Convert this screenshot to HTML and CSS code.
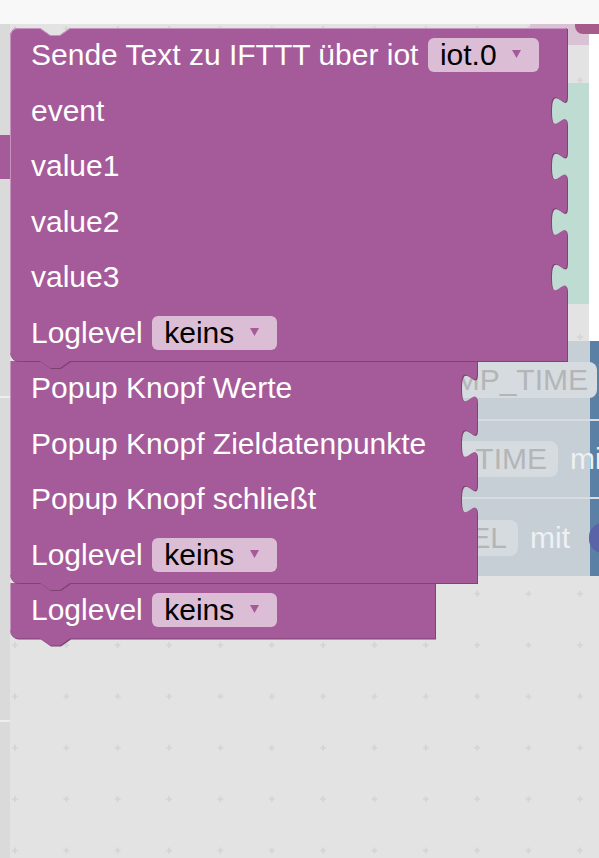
FILE: index.html
```html
<!DOCTYPE html>
<html lang="de">
<head>
<meta charset="utf-8">
<title>Blockly – IFTTT</title>
<link rel="stylesheet" href="styles.css">
</head>
<body>
<div class="page">
  <div class="toolbar"></div>
  <div class="workspace">
    <div class="rail">
      <div class="rail-a"></div>
      <div class="rail-hl"></div>
      <div class="rail-b"></div>
      <div class="rail-line"></div>
      <div class="rail-c"></div>
      <div class="rail-line"></div>
      <div class="rail-d"></div>
    </div>
    <div class="canvas">
      <svg class="grid" width="100%" height="100%">
        <defs>
          <pattern id="cross" width="51.35" height="51.35" patternUnits="userSpaceOnUse" x="-20.675" y="-20.775">
            <path d="M22.675,25.675 h6 M25.675,22.675 v6" stroke="#d3d3d3" stroke-width="1.6" fill="none"/>
          </pattern>
        </defs>
        <rect width="100%" height="100%" fill="url(#cross)"/>
      </svg>
      <div class="ghost"></div>
      <div class="pinkbar"></div>
      <div class="whitepane"></div>
      <div class="teal"></div>
      <div class="bg-block">
        <div class="bg-row">
          <span class="bg-pill bg-pill-1">MP_TIME</span>
        </div>
        <div class="bg-row bg-sep">
          <span class="bg-pill bg-pill-2">TIME</span>
          <span class="bg-label">mit</span>
        </div>
        <div class="bg-row bg-sep">
          <span class="bg-pill bg-pill-3">EL</span>
          <span class="bg-label">mit</span>
          <span class="bg-oval"></span>
        </div>
      </div>

      <div class="stack">
        <div class="block b1">
          <svg class="shape" width="560" height="345">
            <path class="dark" transform="translate(1,1)" d="M0,8 A8,8 0 0 1 8,0 H30 l10,7 h10 l10,-7 H557 V67.5 c0,20 -16,-16 -16,15 s16,-5 16,15 V123 c0,20 -16,-16 -16,15 s16,-5 16,15 V178.5 c0,20 -16,-16 -16,15 s16,-5 16,15 V234 c0,20 -16,-16 -16,15 s16,-5 16,15 V333 H60 l-10,7 h-10 l-10,-7 H8 A8,8 0 0 1 0,325 Z"/>
            <path class="main" d="M0,8 A8,8 0 0 1 8,0 H30 l10,7 h10 l10,-7 H557 V67.5 c0,20 -16,-16 -16,15 s16,-5 16,15 V123 c0,20 -16,-16 -16,15 s16,-5 16,15 V178.5 c0,20 -16,-16 -16,15 s16,-5 16,15 V234 c0,20 -16,-16 -16,15 s16,-5 16,15 V333 H60 l-10,7 h-10 l-10,-7 H8 A8,8 0 0 1 0,325 Z"/>
            <path class="light" d="M0.5,325 V8 A7.5,7.5 0 0 1 8,0.5 H30 l10,7 h10 l10,-7 H556"/>
          </svg>
          <div class="row">Sende Text zu IFTTT über iot
            <span class="dd"><span class="dd-text">iot.0</span><svg class="dd-arrow" width="9" height="8" viewBox="0 0 9 8"><path d="M0,0 H9 L4.5,8 Z"/></svg></span>
          </div>
          <div class="row">event</div>
          <div class="row">value1</div>
          <div class="row">value2</div>
          <div class="row">value3</div>
          <div class="row">Loglevel
            <span class="dd"><span class="dd-text">keins</span><svg class="dd-arrow" width="9" height="8" viewBox="0 0 9 8"><path d="M0,0 H9 L4.5,8 Z"/></svg></span>
          </div>
        </div>

        <div class="block b2">
          <svg class="shape" width="470" height="235">
            <path class="dark" transform="translate(1,1)" d="M0,0 H467 V12 c0,20 -16,-16 -16,15 s16,-5 16,15 V67.5 c0,20 -16,-16 -16,15 s16,-5 16,15 V123 c0,20 -16,-16 -16,15 s16,-5 16,15 V222 H60 l-10,7 h-10 l-10,-7 H8 A8,8 0 0 1 0,214 Z"/>
            <path class="main" d="M0,0 H467 V12 c0,20 -16,-16 -16,15 s16,-5 16,15 V67.5 c0,20 -16,-16 -16,15 s16,-5 16,15 V123 c0,20 -16,-16 -16,15 s16,-5 16,15 V222 H60 l-10,7 h-10 l-10,-7 H8 A8,8 0 0 1 0,214 Z"/>
            <path class="light" d="M0.5,214 V0"/>
          </svg>
          <div class="row">Popup Knopf Werte</div>
          <div class="row">Popup Knopf Zieldatenpunkte</div>
          <div class="row">Popup Knopf schließt</div>
          <div class="row">Loglevel
            <span class="dd"><span class="dd-text">keins</span><svg class="dd-arrow" width="9" height="8" viewBox="0 0 9 8"><path d="M0,0 H9 L4.5,8 Z"/></svg></span>
          </div>
        </div>

        <div class="block b3">
          <svg class="shape" width="428" height="68">
            <path class="dark" transform="translate(1,1)" d="M0,0 H425 V55.5 H60 l-10,7 h-10 l-10,-7 H8 A8,8 0 0 1 0,47.5 Z"/>
            <path class="main" d="M0,0 H425 V55.5 H60 l-10,7 h-10 l-10,-7 H8 A8,8 0 0 1 0,47.5 Z"/>
            <path class="light" d="M0.5,47.5 V0"/>
          </svg>
          <div class="row">Loglevel
            <span class="dd"><span class="dd-text">keins</span><svg class="dd-arrow" width="9" height="8" viewBox="0 0 9 8"><path d="M0,0 H9 L4.5,8 Z"/></svg></span>
          </div>
        </div>
      </div>
    </div>
  </div>
</div>
</body>
</html>
```
FILE: styles.css
```css
* { box-sizing: border-box; }

html, body {
  margin: 0;
  padding: 0;
  width: 599px;
  height: 858px;
  overflow: hidden;
  font-family: "Liberation Sans", Arial, sans-serif;
}

.page {
  display: flex;
  flex-direction: column;
  width: 599px;
  height: 858px;
}

.toolbar {
  height: 24px;
  flex: none;
  background: #f8f8f8;
}

.workspace {
  flex: 1;
  display: flex;
  background: #e3e3e3;
}

/* left rail */
.rail {
  width: 10px;
  flex: none;
  display: flex;
  flex-direction: column;
  background: #dadada;
}
.rail-a { height: 111px; }
.rail-hl { height: 44px; background: #a55b99; }
.rail-b { height: 217px; }
.rail-line { height: 2px; background: #eeeeee; }
.rail-c { height: 322px; }
.rail-d { flex: 1; }

/* canvas */
.canvas {
  position: relative;
  flex: 1;
  overflow: hidden;
}

.grid {
  position: absolute;
  left: 0;
  top: 0;
}

.ghost {
  position: absolute;
  left: 520px;
  top: 0;
  width: 70px;
  height: 21px;
  background: #d9c2d3;
  border-top-right-radius: 14px;
}

.pinkbar {
  position: absolute;
  left: 565px;
  top: 0;
  width: 30px;
  height: 10px;
  background: #a65b8a;
  border-bottom-left-radius: 8px;
}

.whitepane {
  position: absolute;
  left: 579px;
  top: 10px;
  width: 20px;
  height: 307px;
  background: #ffffff;
}

.teal {
  position: absolute;
  left: 535px;
  top: 59px;
  width: 44px;
  height: 221px;
  background: #bfdcd3;
}

/* faded blue block behind */
.bg-block {
  position: absolute;
  left: 430px;
  top: 317px;
  width: 169px;
  height: 235px;
  overflow: hidden;
  background: linear-gradient(to right, #c6ced6 0, #c6ced6 150px, #5b80a5 150px);
  display: flex;
  flex-direction: column;
  font-size: 30px;
}

.bg-row {
  height: 78px;
  display: flex;
  align-items: center;
  white-space: nowrap;
}
.bg-sep {
  height: 79px;
  border-top: 2px solid #d6dce1;
}

.bg-pill {
  flex: none;
  height: 36px;
  display: flex;
  align-items: center;
  justify-content: flex-end;
  padding-right: 11px;
  background: #d6dbe0;
  border-radius: 8px;
  color: #b3b5b7;
}
.bg-pill-1 { width: 157px; padding-right: 9px; }
.bg-pill-2 { width: 118px; }
.bg-pill-3 { width: 78px; }

.bg-label {
  margin-left: 12px;
  color: #eef1f3;
}

.bg-oval {
  flex: none;
  width: 28px;
  height: 30px;
  margin-left: 19px;
  border-radius: 15px;
  background: #5b63a8;
}

/* block stack */
.stack {
  position: relative;
  z-index: 5;
  padding-top: 3.5px;
  display: flex;
  flex-direction: column;
  align-items: flex-start;
}

.block {
  position: relative;
}
.b1 { width: 557px; z-index: 3; }
.b2 { width: 467px; z-index: 2; }
.b3 { width: 425px; z-index: 1; }

.shape {
  position: absolute;
  left: 0;
  top: 0;
  overflow: visible;
}
.shape .main { fill: #a55b99; }
.shape .dark { fill: #7d4373; }
.shape .light { fill: none; stroke: #c593bd; stroke-width: 1; }

.row {
  position: relative;
  height: 55.5px;
  display: flex;
  align-items: center;
  gap: 9.5px;
  padding-left: 21px;
  color: #ffffff;
  font-size: 30px;
  white-space: nowrap;
}

.dd {
  display: inline-flex;
  align-items: center;
  gap: 15.5px;
  height: 34px;
  padding: 0 18px 0 12px;
  background: #dcbdd6;
  border-radius: 6px;
  color: #000000;
}

.dd-arrow {
  fill: #a55b99;
  margin-top: -2px;
}
```
